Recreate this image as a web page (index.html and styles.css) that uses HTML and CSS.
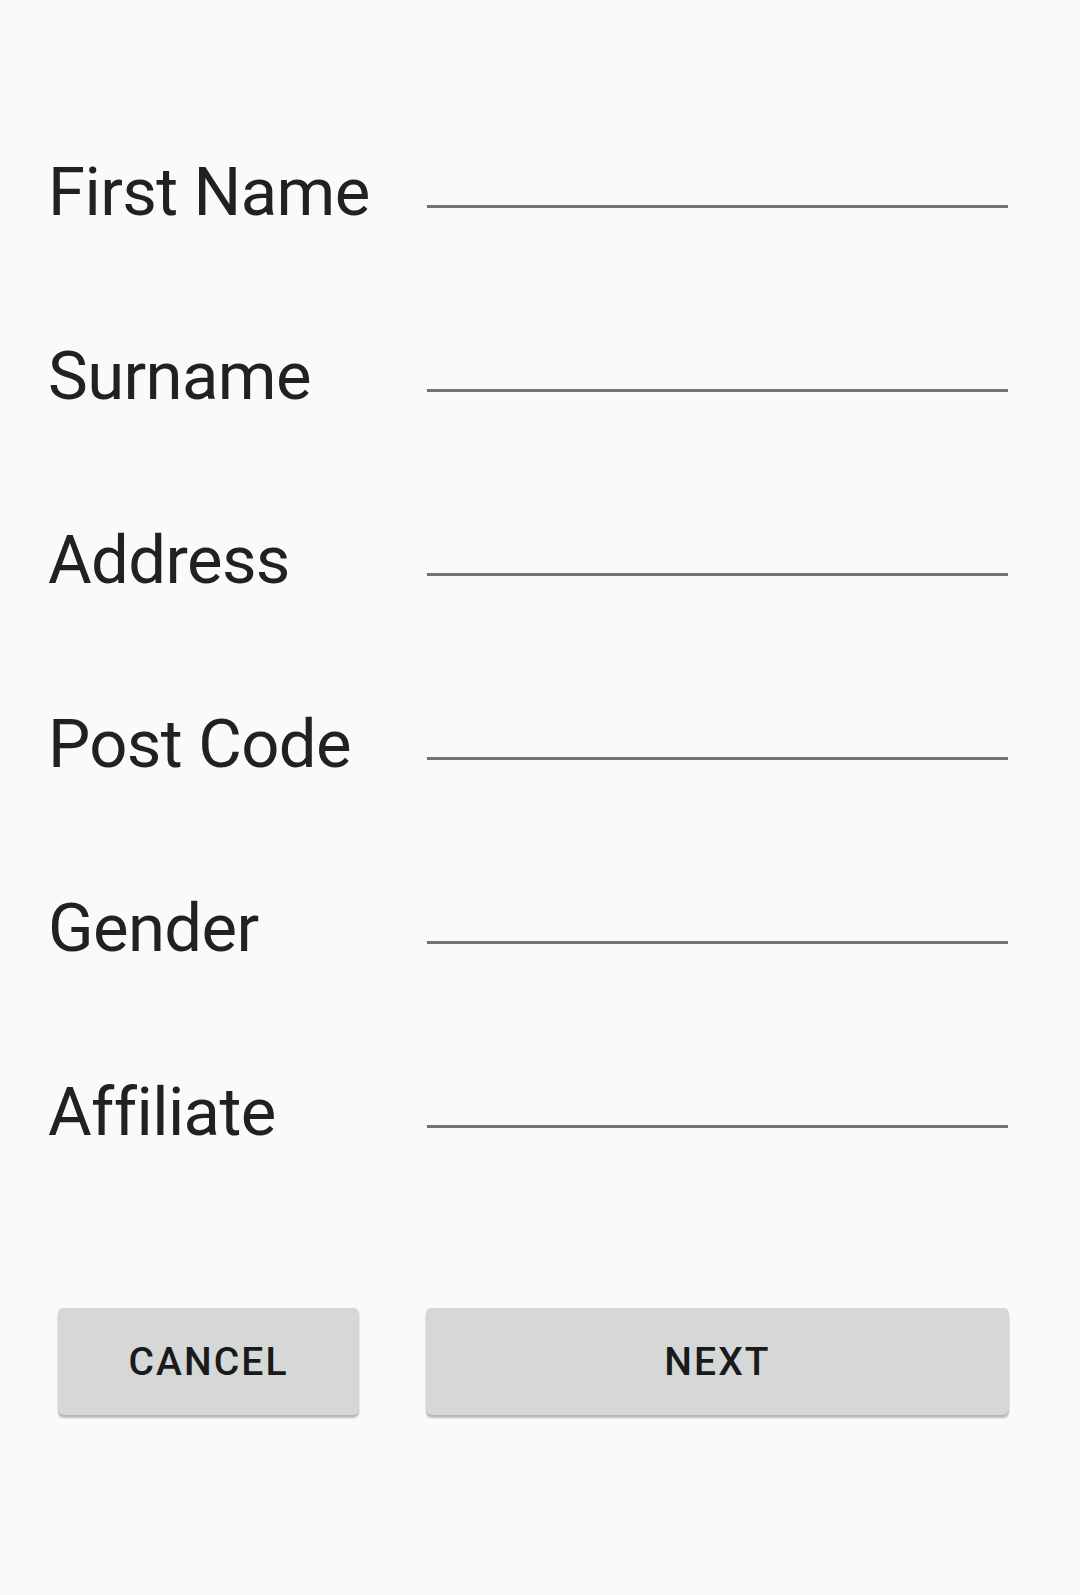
FILE: index.html
```html
<!DOCTYPE html>
<html>
<head>
<meta charset="utf-8">
<link rel="stylesheet" href="styles.css">
</head>
<body>
<main class="form">
  <div class="row"><span class="label">First Name</span><span class="field"></span></div>
  <div class="row"><span class="label">Surname</span><span class="field"></span></div>
  <div class="row"><span class="label">Address</span><span class="field"></span></div>
  <div class="row"><span class="label">Post Code</span><span class="field"></span></div>
  <div class="row"><span class="label">Gender</span><span class="field"></span></div>
  <div class="row"><span class="label">Affiliate</span><span class="field"></span></div>
  <div class="actions">
    <button class="btn btn-cancel">CANCEL</button>
    <button class="btn btn-next">NEXT</button>
  </div>
</main>
</body>
</html>
```
FILE: styles.css
```css
html, body {
  margin: 0;
  padding: 0;
  background: #fafafa;
}
body {
  width: 1080px;
  height: 1595px;
  font-family: Roboto, "Noto Sans", sans-serif;
  color: #212121;
}
.form {
  padding: 153px 0 0 48px;
}
.row {
  display: flex;
  align-items: flex-start;
  height: 184px;
}
.label {
  width: 379px;
  font-size: 67px;
  line-height: 79px;
  letter-spacing: -0.6px;
  font-variant-ligatures: none;
  white-space: nowrap;
}
.field {
  display: block;
  width: 581px;
  height: 0;
  margin-top: 52px;
  border-bottom: 3px solid #737373;
}
.actions {
  display: flex;
  margin-top: 51px;
  padding-left: 10px;
}
.btn {
  height: 107px;
  border: none;
  border-radius: 6px;
  background: #d6d7d7;
  box-shadow: 0 3px 2px rgba(0, 0, 0, 0.26), 0 0 1px rgba(0, 0, 0, 0.16);
  font-family: Roboto, "Noto Sans", sans-serif;
  font-weight: 500;
  font-size: 39px;
  letter-spacing: 2.1px;
  color: #1a1a1a;
  padding: 0;
}
.btn-cancel {
  width: 301px;
}
.btn-next {
  width: 583px;
  margin-left: 67px;
}
```
